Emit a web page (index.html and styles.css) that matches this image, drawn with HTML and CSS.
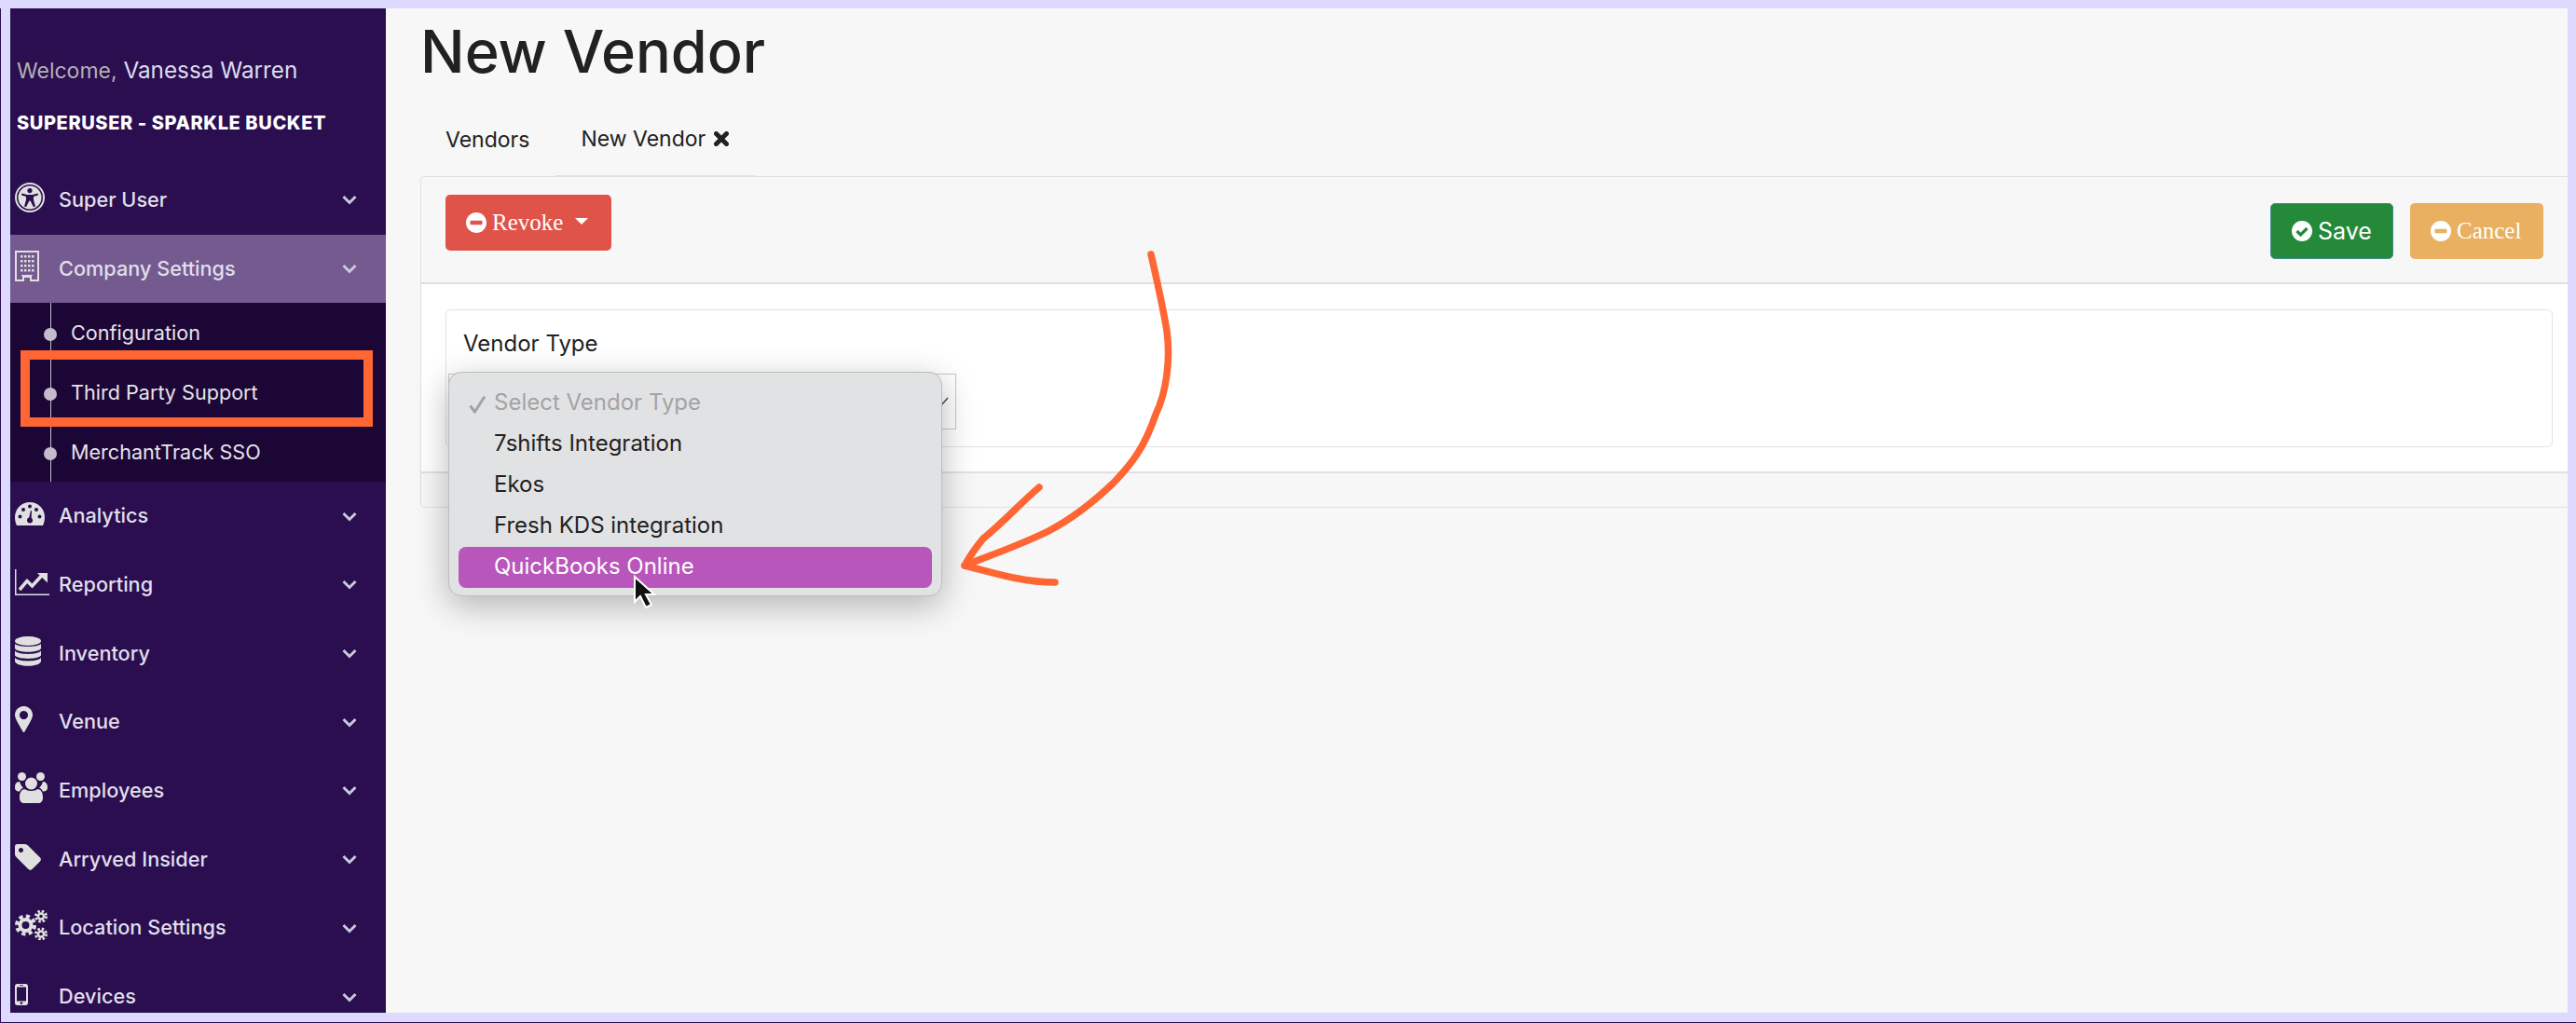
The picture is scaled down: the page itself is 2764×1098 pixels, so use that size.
FILE: index.html
```html
<!DOCTYPE html>
<html lang="en">
<head>
  <meta charset="UTF-8" />
  <title>New Vendor</title>
  <link rel="stylesheet" href="styles.css">
</head>
<body>
  <div class="frame">

    <!-- Sidebar -->
    <aside class="sidebar">
      <div class="sidebar-head">
        <p class="welcome"><span class="welcome-word">Welcome,</span> Vanessa Warren</p>
        <p class="org">SUPERUSER - SPARKLE BUCKET</p>
      </div>

      <a class="nav-item">
        <span class="nav-icon">
          <svg width="32" height="32" viewBox="0 0 32 32"><circle cx="16" cy="16" r="15" fill="none" stroke="currentColor" stroke-width="2"/><circle cx="16" cy="16" r="12.5" fill="currentColor"/><circle cx="16" cy="8.6" r="2.6" fill="#2a0e4f"/><path d="M7.5 11.5 L13 13 H19 L24.5 11.5 L25 13.4 L20 15 V18.5 L22 25.5 L19.8 26 L16.6 19.5 H15.4 L12.2 26 L10 25.5 L12 18.5 V15 L7 13.4 Z" fill="#2a0e4f"/></svg>
        </span>
        <span class="nav-label">Super User</span>
        <svg class="chevron" width="16" height="11" viewBox="0 0 16 11"><path d="M1.5 2 L8 8.5 L14.5 2" fill="none" stroke="currentColor" stroke-width="3"/></svg>
      </a>

      <a class="nav-item active">
        <span class="nav-icon">
          <svg width="26" height="33" viewBox="0 0 26 33"><path d="M1 1 H25 V32 H17 V28 H9 V32 H1 Z" fill="none" stroke="currentColor" stroke-width="2"/><path d="M6 5 H8.500 V7.500 H6 Z M10 5 H12.500 V7.500 H10 Z M14 5 H16.500 V7.500 H14 Z M18 5 H20.500 V7.500 H18 Z M6 10 H8.500 V12.500 H6 Z M10 10 H12.500 V12.500 H10 Z M14 10 H16.500 V12.500 H14 Z M18 10 H20.500 V12.500 H18 Z M6 15 H8.500 V17.500 H6 Z M10 15 H12.500 V17.500 H10 Z M14 15 H16.500 V17.500 H14 Z M18 15 H20.500 V17.500 H18 Z M6 20 H8.500 V22.500 H6 Z M10 20 H12.500 V22.500 H10 Z M14 20 H16.500 V22.500 H14 Z M18 20 H20.500 V22.500 H18 Z M7 26 H19 V27 H7 Z" fill="currentColor"/></svg>
        </span>
        <span class="nav-label">Company Settings</span>
        <svg class="chevron" width="16" height="11" viewBox="0 0 16 11"><path d="M1.5 2 L8 8.5 L14.5 2" fill="none" stroke="currentColor" stroke-width="3"/></svg>
      </a>

      <ul class="submenu">
        <li>Configuration</li>
        <li>Third Party Support</li>
        <li>MerchantTrack SSO</li>
      </ul>

      <a class="nav-item">
        <span class="nav-icon">
          <svg width="32" height="25" viewBox="0 0 32 25"><path d="M16 0 C7 0 0 7 0 16 C0 19 .5 22 2 25 H30 C31.500 22 32 19 32 16 C32 7 25 0 16 0 Z" fill="currentColor"/><g fill="#2a0e4f"><circle cx="5.500" cy="15.500" r="2"/><circle cx="9" cy="8" r="2"/><circle cx="16" cy="4.500" r="2"/><circle cx="23" cy="8" r="2"/><circle cx="26.500" cy="15.500" r="2"/><circle cx="16" cy="19.500" r="3"/><path d="M14.500 19 L17 9 L18 9.300 L17.500 19.500 Z"/></g></svg>
        </span>
        <span class="nav-label">Analytics</span>
        <svg class="chevron" width="16" height="11" viewBox="0 0 16 11"><path d="M1.5 2 L8 8.5 L14.5 2" fill="none" stroke="currentColor" stroke-width="3"/></svg>
      </a>

      <a class="nav-item">
        <span class="nav-icon">
          <svg width="37" height="28" viewBox="0 0 37 28"><path d="M.75 0 V27.250 H37" fill="none" stroke="currentColor" stroke-width="1.500"/><path d="M5 22 L13 12.500 L18.500 18 L29 6.500" fill="none" stroke="currentColor" stroke-width="3.500"/><path d="M24 4 H35 V14.500 Z" fill="currentColor"/></svg>
        </span>
        <span class="nav-label">Reporting</span>
        <svg class="chevron" width="16" height="11" viewBox="0 0 16 11"><path d="M1.5 2 L8 8.5 L14.5 2" fill="none" stroke="currentColor" stroke-width="3"/></svg>
      </a>

      <a class="nav-item">
        <span class="nav-icon">
          <svg width="28" height="32" viewBox="0 0 28 32"><ellipse cx="14" cy="5" rx="14" ry="5" fill="currentColor"/><path d="M0 8 C3 12 25 12 28 8 V13 C25 18 3 18 0 13 Z M0 15.500 C3 20 25 20 28 15.500 V20.500 C25 25 3 25 0 20.500 Z M0 23 C3 27.500 25 27.500 28 23 V27 C26 33.300 2 33.300 0 27 Z" fill="currentColor"/></svg>
        </span>
        <span class="nav-label">Inventory</span>
        <svg class="chevron" width="16" height="11" viewBox="0 0 16 11"><path d="M1.5 2 L8 8.5 L14.5 2" fill="none" stroke="currentColor" stroke-width="3"/></svg>
      </a>

      <a class="nav-item">
        <span class="nav-icon">
          <svg width="19" height="28" viewBox="0 0 19 28"><path fill-rule="evenodd" d="M9.500 0 C4.200 0 0 4.200 0 9.500 C0 14 7 24 8.300 27 C8.800 28.300 10.200 28.300 10.700 27 C12 24 19 14 19 9.500 C19 4.200 14.800 0 9.500 0 Z M9.500 5 A4.500 4.500 0 1 1 9.499 5 Z" fill="currentColor"/></svg>
        </span>
        <span class="nav-label">Venue</span>
        <svg class="chevron" width="16" height="11" viewBox="0 0 16 11"><path d="M1.5 2 L8 8.5 L14.5 2" fill="none" stroke="currentColor" stroke-width="3"/></svg>
      </a>

      <a class="nav-item">
        <span class="nav-icon">
          <svg width="35" height="33" viewBox="0 0 35 33"><g fill="currentColor"><circle cx="7.500" cy="4.500" r="4.500"/><circle cx="27.500" cy="4.500" r="4.500"/><circle cx="17.500" cy="12" r="6.500"/><path d="M0 16 C0 12 2 10 5 10 C6 13 7 15 9 16.500 C7 17.500 5.500 19 5 20.500 C2 20.500 0 19.500 0 16 Z M35 16 C35 12 33 10 30 10 C29 13 28 15 26 16.500 C28 17.500 29.500 19 30 20.500 C33 20.500 35 19.500 35 16 Z"/><path d="M10.500 18 C14 20.500 21 20.500 24.500 18 C28 18.500 30 21.500 30 27 C30 31 28 33 25 33 H10 C7 33 5 31 5 27 C5 21.500 7 18.500 10.500 18 Z"/></g></svg>
        </span>
        <span class="nav-label">Employees</span>
        <svg class="chevron" width="16" height="11" viewBox="0 0 16 11"><path d="M1.5 2 L8 8.5 L14.5 2" fill="none" stroke="currentColor" stroke-width="3"/></svg>
      </a>

      <a class="nav-item">
        <span class="nav-icon">
          <svg width="28" height="28" viewBox="0 0 28 28"><path fill-rule="evenodd" d="M2.500 0 H11 C12 0 13 .5 14 1.500 L26.800 14.300 C28.300 15.800 28.300 17.200 26.800 18.700 L18.700 26.800 C17.200 28.300 15.800 28.300 14.300 26.800 L1.500 14 C.5 13 0 12 0 11 V2.500 C0 1 1 0 2.500 0 Z M6.500 4 A2.500 2.500 0 1 0 6.501 4 Z" fill="currentColor"/></svg>
        </span>
        <span class="nav-label">Arryved Insider</span>
        <svg class="chevron" width="16" height="11" viewBox="0 0 16 11"><path d="M1.5 2 L8 8.5 L14.5 2" fill="none" stroke="currentColor" stroke-width="3"/></svg>
      </a>

      <a class="nav-item">
        <span class="nav-icon">
          <svg width="35" height="32" viewBox="0 0 35 32"><g fill="none" stroke="currentColor"><circle cx="11.500" cy="16" r="6" stroke-width="4"/><circle cx="11.500" cy="16" r="9.500" stroke-width="4" stroke-dasharray="4.200 3.260"/><circle cx="28" cy="6.500" r="3" stroke-width="2.400"/><circle cx="28" cy="6.500" r="5.500" stroke-width="3" stroke-dasharray="2.500 1.820"/><circle cx="28" cy="25.500" r="3" stroke-width="2.400"/><circle cx="28" cy="25.500" r="5.500" stroke-width="3" stroke-dasharray="2.500 1.820"/></g></svg>
        </span>
        <span class="nav-label">Location Settings</span>
        <svg class="chevron" width="16" height="11" viewBox="0 0 16 11"><path d="M1.5 2 L8 8.5 L14.5 2" fill="none" stroke="currentColor" stroke-width="3"/></svg>
      </a>

      <a class="nav-item">
        <span class="nav-icon">
          <svg width="14" height="23" viewBox="0 0 14 23"><path fill-rule="evenodd" d="M2.500 0 H11.500 C13 0 14 1 14 2.500 V20.500 C14 22 13 23 11.500 23 H2.500 C1 23 0 22 0 20.500 V2.500 C0 1 1 0 2.500 0 Z M2 3.500 V18.500 H12 V3.500 Z M5 1.300 V2 H9 V1.300 Z M7 19.300 A1.300 1.300 0 1 0 7.001 19.300 Z" fill="currentColor"/></svg>
        </span>
        <span class="nav-label">Devices</span>
        <svg class="chevron" width="16" height="11" viewBox="0 0 16 11"><path d="M1.5 2 L8 8.5 L14.5 2" fill="none" stroke="currentColor" stroke-width="3"/></svg>
      </a>
    </aside>

    <!-- Main content -->
    <main class="main">
      <h1 class="page-title">New Vendor</h1>

      <div class="tabs">
        <a class="tab">Vendors</a>
        <a class="tab tab-active">New Vendor
          <svg class="tab-close" width="16" height="16" viewBox="0 0 16 16"><path d="M2.500 2.500 L13.500 13.500 M13.500 2.500 L2.500 13.500" stroke="currentColor" stroke-width="5" stroke-linecap="round"/></svg>
        </a>
      </div>

      <section class="card">
        <div class="card-header">
          <button class="btn btn-revoke">
            <svg width="22" height="22" viewBox="0 0 22 22"><circle cx="11" cy="11" r="11" fill="#fff"/><rect x="4.500" y="8.800" width="13" height="4.400" rx="1" fill="#e05349"/></svg>
            Revoke
            <span class="caret"></span>
          </button>
          <div class="actions">
            <button class="btn btn-save">
              <svg width="22" height="22" viewBox="0 0 22 22"><circle cx="11" cy="11" r="11" fill="#fff"/><path d="M5.500 11 L9.500 15 L16.500 8" fill="none" stroke="#248a3a" stroke-width="3.200"/></svg>
              Save
            </button>
            <button class="btn btn-cancel">
              <svg width="22" height="22" viewBox="0 0 22 22"><circle cx="11" cy="11" r="11" fill="#fff"/><rect x="4.500" y="8.800" width="13" height="4.400" rx="1" fill="#e8b060"/></svg>
              Cancel
            </button>
          </div>
        </div>

        <div class="card-body">
          <div class="field-card">
            <label class="field-label">Vendor Type</label>
            <div class="select">
              <svg width="16" height="10" viewBox="0 0 16 10"><path d="M1 1 L8 9 L15 1" fill="none" stroke="#4a4f55" stroke-width="1.500"/></svg>
            </div>
          </div>
        </div>

        <div class="card-footer"></div>
      </section>

      <!-- native select popup -->
      <ul class="popup">
        <li class="popup-item popup-placeholder">
          <svg class="popup-check" width="19" height="20" viewBox="0 0 19 20"><path d="M1.500 11.500 L6.500 18 L17 1.500" fill="none" stroke="currentColor" stroke-width="3"/></svg>
          Select Vendor Type
        </li>
        <li class="popup-item">7shifts Integration</li>
        <li class="popup-item">Ekos</li>
        <li class="popup-item">Fresh KDS integration</li>
        <li class="popup-item popup-selected">QuickBooks Online</li>
      </ul>
    </main>
  </div>

  <!-- Annotations drawn over the screenshot -->
  <svg class="markup" width="2764" height="1098" viewBox="0 0 2764 1098">
    <rect x="27" y="381" width="368" height="72" fill="none" stroke="#ff6633" stroke-width="10"/>
    <g fill="none" stroke="#ff6633" stroke-width="7.500" stroke-linecap="round" stroke-linejoin="round">
      <path d="M1235 273 C1240 295 1247 325 1252 355 C1256 385 1252 420 1240 445 C1228 480 1215 497 1195 518 C1170 542 1150 557 1125 570 C1095 585 1065 595 1035 607"/>
      <path d="M1115 523 C1095 540 1075 562 1055 578 C1045 590 1040 598 1035 607 C1060 613 1095 625 1132 625"/>
    </g>
    <path d="M681 619 V646 L687 640 L693 652 L699 649 L693 638 L702 638 Z" fill="#111" stroke="#fff" stroke-width="2"/>
  </svg>
</body>
</html>
```

FILE: styles.css
```css
* { margin: 0; padding: 0; box-sizing: border-box; }

html, body {
  height: 100%;
  overflow: hidden;
}

body {
  background: #dedaff;
  font-family: Inter, "Liberation Sans", sans-serif;
  position: relative;
}

.frame {
  display: flex;
  height: 1089px;
  margin-top: 9px;
  padding: 0 9px 10px 10px;
  border-left: 1px solid #2a0e4f;
  border-bottom: 1px solid #2a0e4f;
}

/* Sidebar */
.sidebar {
  width: 403px;
  flex-shrink: 0;
  background: #2a0e4f;
  overflow: hidden;
}

.sidebar-head {
  height: 169px;
  padding: 51px 0 0 7px;
}

.welcome {
  font-size: 24.3px;
  line-height: 30px;
  color: #dcdcec;
}

.welcome-word {
  font-size: 23px;
  color: #b5b0b5;
}

.org {
  margin-top: 29px;
  font-size: 20px;
  line-height: 24px;
  font-weight: 800;
  letter-spacing: 0.6px;
  color: #fff;
}

.nav-item {
  display: flex;
  align-items: center;
  height: 73.7px;
  padding: 0 31px 0 5px;
  color: #e0e0e0;
}

.nav-item.active { background: #755a8f; }

.nav-icon {
  width: 47px;
  flex-shrink: 0;
  display: flex;
  margin-top: -6px;
}

.nav-label {
  flex: 1;
  padding-bottom: 2px;
  font-size: 21.7px;
  font-weight: 500;
  color: #e0dfec;
}

.chevron { color: #c9c9dc; }

.submenu {
  list-style: none;
  position: relative;
  height: 192px;
  background: #1c0635;
}

.submenu::before {
  content: '';
  position: absolute;
  top: 0;
  bottom: 0;
  left: 43px;
  width: 1px;
  background: #c4bccd;
}

.submenu li {
  position: relative;
  height: 64px;
  padding-left: 65px;
  line-height: 64px;
  font-size: 21.6px;
  color: #e6e3ea;
}

.submenu li::before {
  content: '';
  position: absolute;
  left: 36px;
  top: 27px;
  width: 14px;
  height: 14px;
  border-radius: 50%;
  background: #c4bccd;
}

/* Main */
.main {
  flex: 1;
  min-width: 0;
  position: relative;
  background: #f7f7f7;
  padding: 8px 0 0 37px;
}

.page-title {
  font-size: 63px;
  line-height: 77px;
  font-weight: 500;
  color: #212121;
}

.tabs {
  display: flex;
  height: 96px;
  padding-top: 14px;
}

.tab {
  display: flex;
  align-items: center;
  gap: 9px;
  height: 82px;
  padding: 2px 28px 0 27px;
  font-size: 23px;
  color: #212121;
}

.tab-active { border-bottom: 2px solid #dee2e6; }

.tab-close { color: #212121; }

.card {
  margin-top: -1px;
  border: 1px solid #e0e0e0;
  border-right: 0;
  border-radius: 5px 0 0 5px;
  background: #f7f7f7;
}

.card-header {
  display: flex;
  justify-content: space-between;
  align-items: flex-start;
  height: 115px;
  padding: 19px 26px 0 26px;
  border-bottom: 2px solid #e0e0e0;
}

.actions {
  display: flex;
  gap: 18px;
  margin-top: 9px;
}

.btn {
  display: flex;
  align-items: center;
  height: 60px;
  padding: 0 22px;
  gap: 6px;
  border: 0;
  border-radius: 5px;
  color: #fff;
  font-size: 25px;
}

.btn-revoke {
  width: 178px;
  background: #e05349;
  font-family: "Liberation Serif", serif;
}

.btn-save {
  width: 132px;
  background: #248a3a;
  border: 1px solid #3c8f8f;
  font-family: Inter, sans-serif;
}

.btn-cancel {
  width: 143px;
  background: #e8b060;
  font-family: "Liberation Serif", serif;
}

.caret {
  width: 0;
  height: 0;
  margin: -4px 0 0 7px;
  border-left: 7px solid transparent;
  border-right: 7px solid transparent;
  border-top: 7px solid #fff;
}

.card-body {
  height: 203px;
  padding: 27px 16px 0 26px;
  background: #fff;
  border-bottom: 2px solid #e0e0e0;
}

.field-card {
  height: 148px;
  padding: 22px 10px 0 18px;
  border: 1px solid #e3e3e3;
  border-radius: 6px;
}

.field-label {
  display: block;
  font-size: 24px;
  line-height: 28px;
  color: #212121;
}

.select {
  display: flex;
  align-items: center;
  justify-content: flex-end;
  width: 545px;
  height: 60px;
  margin-top: 18px;
  margin-left: -16px;
  padding-right: 7px;
  border: 1px solid #c4c8cc;
}

.card-footer { height: 36px; }

/* Popup */
.popup {
  list-style: none;
  position: absolute;
  left: 67px;
  top: 390px;
  width: 530px;
  height: 241px;
  padding: 11px 10px 0;
  background: #e1e2e4;
  border: 1px solid #bcbcbc;
  border-radius: 14px;
  box-shadow: 0 10px 36px rgba(0, 0, 0, 0.28);
}

.popup-item {
  position: relative;
  height: 44px;
  padding-left: 38px;
  line-height: 42px;
  font-size: 24px;
  color: #212121;
  border-radius: 8px;
}

.popup-placeholder { color: #a3a3a5; }

.popup-check {
  position: absolute;
  left: 11px;
  top: 13px;
}

.popup-selected {
  background: #b956bb;
  color: #fff;
}

.markup {
  position: absolute;
  top: 0;
  left: 0;
  pointer-events: none;
}
```
